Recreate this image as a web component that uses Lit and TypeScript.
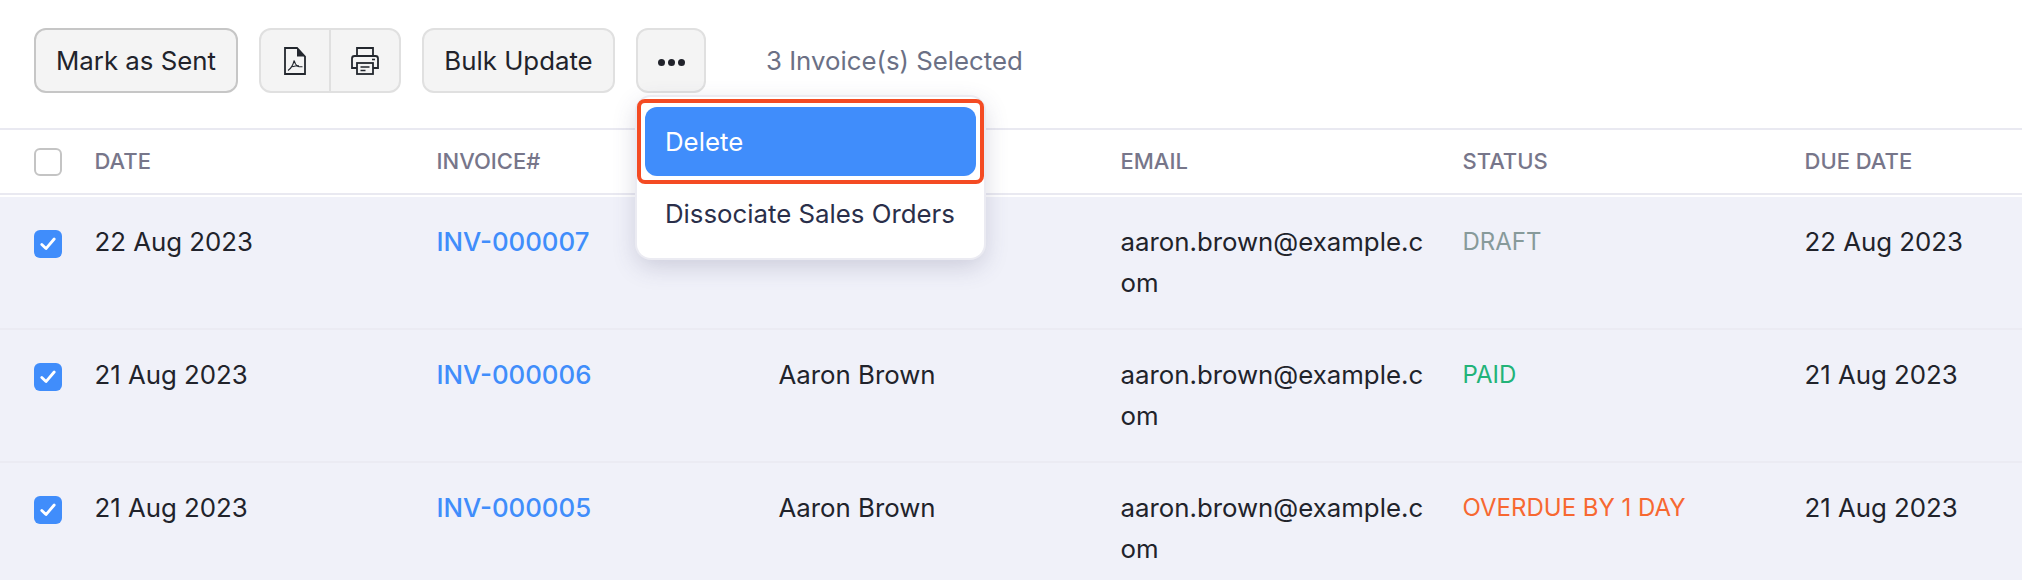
import { LitElement, html, css, svg } from "lit";
import { customElement } from "lit/decorators.js";

const rows = [
  { date: "22 Aug 2023", inv: "INV-000007", status: "DRAFT", cls: "draft", due: "22 Aug 2023" },
  { date: "21 Aug 2023", inv: "INV-000006", status: "PAID", cls: "paid", due: "21 Aug 2023" },
  { date: "21 Aug 2023", inv: "INV-000005", status: "OVERDUE BY 1 DAY", cls: "overdue", due: "21 Aug 2023" },
];

const pdfIcon = svg`<svg width="22" height="28" viewBox="0 0 22 28" fill="none">
  <path d="M1 1H13L21 9.5V27H1Z" stroke="#23272e" stroke-width="1.8"/>
  <path d="M13 1L21 9.5H13Z" fill="#23272e"/>
  <path d="M4 23.5C6.5 22 9 18 10.2 13.5C10.8 16.5 12.5 18.6 14 19.4C15.5 19.9 17.5 19.8 18.5 19.8M8.5 19.7C11 18.8 13 18.6 15 18.7" stroke="#23272e" stroke-width="1.1"/>
</svg>`;

const printIcon = svg`<svg width="28" height="28" viewBox="0 0 28 28" fill="none" stroke="#23272e" stroke-width="1.8">
  <path d="M6 9V1H22V9"/>
  <path d="M6 21H1V11.5C1 10 2 9 3.5 9H24.5C26 9 27 10 27 11.5V21H22"/>
  <rect x="6" y="16" width="16" height="11" fill="#f4f4f4"/>
  <path d="M9.5 20H18.5M9.5 23.5H14.5" stroke-width="1.7"/>
  <path d="M21 12.5H24" stroke-width="1.6"/>
</svg>`;

const check = svg`<svg width="16" height="14" viewBox="0 0 16 14" fill="none"><path d="M1.8 7.5L6 11.6L14.2 2" stroke="#fff" stroke-width="2.8" stroke-linecap="round" stroke-linejoin="round"/></svg>`;

@customElement("app-root")
export class AppRoot extends LitElement {
  static styles = css`
    :host {
      display: block;
      width: 2022px;
      height: 580px;
      overflow: hidden;
      background: #fff;
      font-family: Inter, "Liberation Sans", sans-serif;
      color: #21232b;
      font-size: 25.8px;
    }
    .toolbar {
      display: flex;
      align-items: flex-start;
      height: 128px;
      box-sizing: border-box;
      padding: 28px 0 0 34px;
    }
    .btn {
      height: 65px;
      box-sizing: border-box;
      background: #f4f4f4;
      border: 2px solid #e0e0e0;
      border-radius: 12px;
      display: flex;
      align-items: center;
      justify-content: center;
      color: #21232b;
    }
    .mark { width: 204px; border-color: #c6c6c6; }
    .group { width: 142px; margin-left: 21px; padding: 0; }
    .group > div { flex: 1; height: 100%; display: flex; align-items: center; justify-content: center; }
    .group > div + div { border-left: 2px solid #e0e0e0; }
    .bulk { width: 193px; margin-left: 21px; }
    .more-wrap { position: relative; margin-left: 21px; }
    .more { width: 70px; }
    .dots { display: flex; gap: 3px; padding-top: 3px; }
    .dots i { width: 7px; height: 7px; border-radius: 50%; background: #21232b; }
    .sel { margin-left: 60px; color: #6b7085; height: 65px; line-height: 65px; }
    .menu {
      position: absolute;
      top: 69px;
      left: 1px;
      width: 347px;
      height: 161px;
      box-sizing: border-box;
      background: #fff;
      border-radius: 14px;
      box-shadow: 0 0 0 2px #ebebf2, 0 8px 24px rgba(70, 70, 110, 0.22);
      z-index: 5;
      padding-top: 2px;
      color: #2a2f4a;
    }
    .hl {
      border: 4px solid #f44b23;
      border-radius: 8px;
      padding: 4px;
      height: 85px;
      box-sizing: border-box;
      background: #fff;
    }
    .hl div {
      background: #408dfb;
      color: #fff;
      height: 100%;
      border-radius: 12px;
      padding-left: 20px;
      display: flex;
      align-items: center;
    }
    .item { padding: 9px 0 0 28px; height: 41px; display: flex; align-items: center; }
    .head, .row {
      display: grid;
      grid-template-columns: 94.5px repeat(5, 342px) 1fr;
    }
    .head {
      height: 67px;
      box-sizing: border-box;
      border-top: 2px solid #e9e9f1;
      border-bottom: 2px solid #e9e9f1;
      align-items: center;
      font-size: 22px;
      font-weight: 500;
      color: #77768a;
      margin-bottom: 2px;
    }
    .lbl { padding-bottom: 2px; }
    .row {
      height: 133px;
      box-sizing: border-box;
      background: #f0f1f9;
      border-bottom: 2px solid #ebebf3;
      line-height: 41px;
      padding-top: 24px;
    }
    .cell-cb { padding-left: 34px; display: flex; }
    .head .cell-cb { align-items: center; }
    .row .cell-cb { padding-top: 9px; }
    .cb {
      width: 28px;
      height: 28px;
      box-sizing: border-box;
      border-radius: 6px;
      border: 2px solid #c4c4c4;
      background: #fff;
    }
    .cb.on {
      background: #408dfb;
      border: none;
      display: flex;
      align-items: center;
      justify-content: center;
    }
    .mail { width: 305px; word-break: break-all; }
    .link { color: #408dfb; font-weight: 500; }
    .st { font-size: 24px; }
    .draft { color: #879a9a; }
    .paid { color: #22b378; }
    .overdue { color: #f76831; }
  `;

  render() {
    return html`
      <div class="toolbar">
        <div class="btn mark">Mark as Sent</div>
        <div class="btn group"><div>${pdfIcon}</div><div>${printIcon}</div></div>
        <div class="btn bulk">Bulk Update</div>
        <div class="more-wrap">
          <div class="btn more"><div class="dots"><i></i><i></i><i></i></div></div>
          <div class="menu">
            <div class="hl"><div>Delete</div></div>
            <div class="item">Dissociate Sales Orders</div>
          </div>
        </div>
        <div class="sel">3 Invoice(s) Selected</div>
      </div>
      <div class="head">
        <div class="cell-cb"><div class="cb"></div></div>
        <div class="lbl">DATE</div><div class="lbl">INVOICE#</div><div class="lbl">CUSTOMER NAME</div><div class="lbl">EMAIL</div><div class="lbl">STATUS</div><div class="lbl">DUE DATE</div>
      </div>
      ${rows.map(
        (r) => html`<div class="row">
          <div class="cell-cb"><div class="cb on">${check}</div></div>
          <div>${r.date}</div>
          <div class="link">${r.inv}</div>
          <div>Aaron Brown</div>
          <div class="mail">aaron.brown@example.com</div>
          <div class="st ${r.cls}">${r.status}</div>
          <div>${r.due}</div>
        </div>`
      )}
    `;
  }
}
